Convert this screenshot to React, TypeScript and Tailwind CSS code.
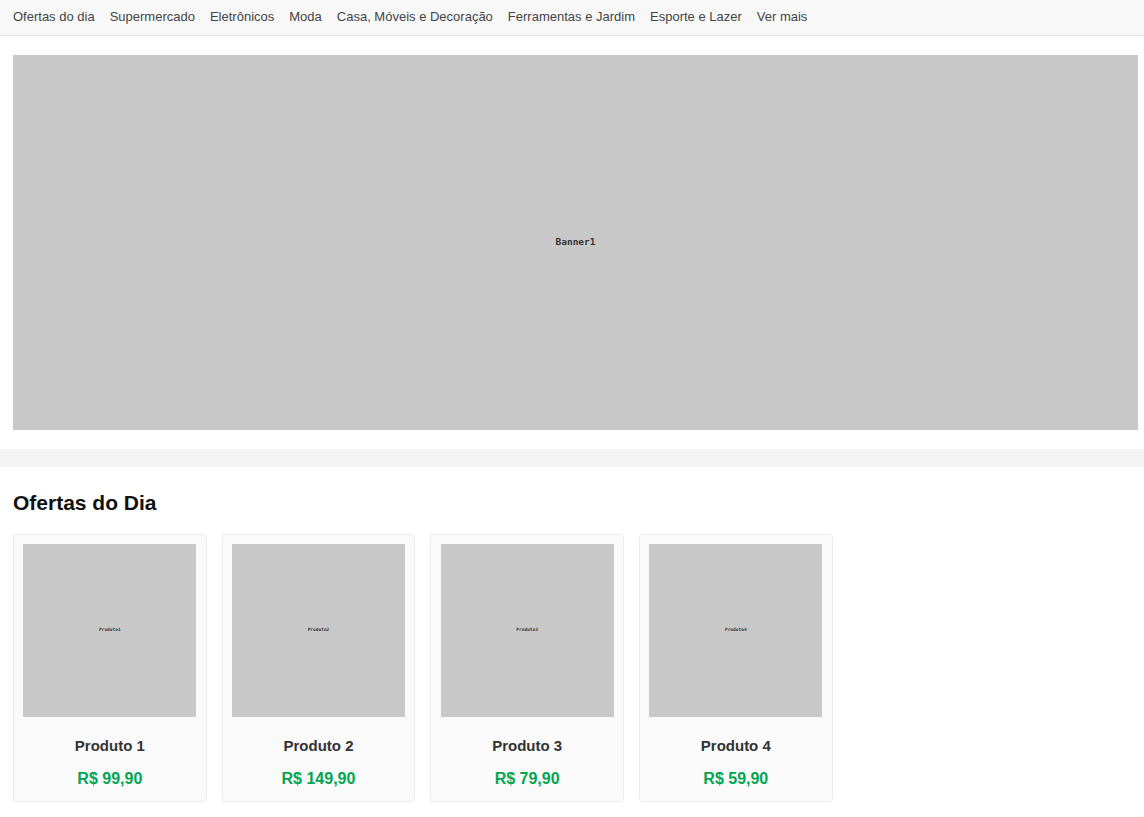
import React from "react";

const navItems = [
  "Ofertas do dia",
  "Supermercado",
  "Eletrônicos",
  "Moda",
  "Casa, Móveis e Decoração",
  "Ferramentas e Jardim",
  "Esporte e Lazer",
  "Ver mais",
];

const products = [
  { name: "Produto 1", price: "R$ 99,90", img: "Produto1" },
  { name: "Produto 2", price: "R$ 149,90", img: "Produto2" },
  { name: "Produto 3", price: "R$ 79,90", img: "Produto3" },
  { name: "Produto 4", price: "R$ 59,90", img: "Produto4" },
];

export default function App() {
  return (
    <div className="min-h-[817px] bg-white font-['Liberation_Sans',Arial,sans-serif]">
      <nav className="h-[36px] bg-[#f8f8f8] border-b border-[#e0e0e0] flex items-center pb-[2px] px-[13px] gap-[15px] text-[13px] text-[#444]">
        {navItems.map((n) => (
          <a key={n} className="whitespace-nowrap cursor-pointer">
            {n}
          </a>
        ))}
      </nav>
      <section className="pt-[19px] pb-[19px] px-[13px]">
        <div className="w-[1125px] h-[375px] bg-[#c8c8c8] flex items-center justify-center">
          <span className="font-['DejaVu_Sans_Mono',monospace] font-bold text-[9.5px] text-[#333]">
            Banner1
          </span>
        </div>
      </section>
      <div className="h-[18px] bg-[#f4f4f4]" />
      <section className="px-[13px] pt-[24px]">
        <h2 className="text-[21px] leading-[24px] font-bold text-[#111]">Ofertas do Dia</h2>
        <div className="mt-[19px] flex gap-[15px]">
          {products.map((p) => (
            <div
              key={p.name}
              className="w-[193.67px] h-[268px] bg-[#fafafa] border border-[#ececec] rounded-[4px] pt-[9px] px-[9px] pb-[14px] flex flex-col items-center"
            >
              <div className="w-[173px] h-[173px] shrink-0 bg-[#c8c8c8] flex items-center justify-center">
                <span className="font-['DejaVu_Sans_Mono',monospace] font-bold text-[4.5px] text-[#333]">
                  {p.img}
                </span>
              </div>
              <div className="mt-[20px] text-[15px] leading-[18px] font-bold text-[#333]">{p.name}</div>
              <div className="mt-[14px] text-[16px] leading-[19px] font-bold text-[#00a650]">{p.price}</div>
            </div>
          ))}
        </div>
      </section>
    </div>
  );
}
